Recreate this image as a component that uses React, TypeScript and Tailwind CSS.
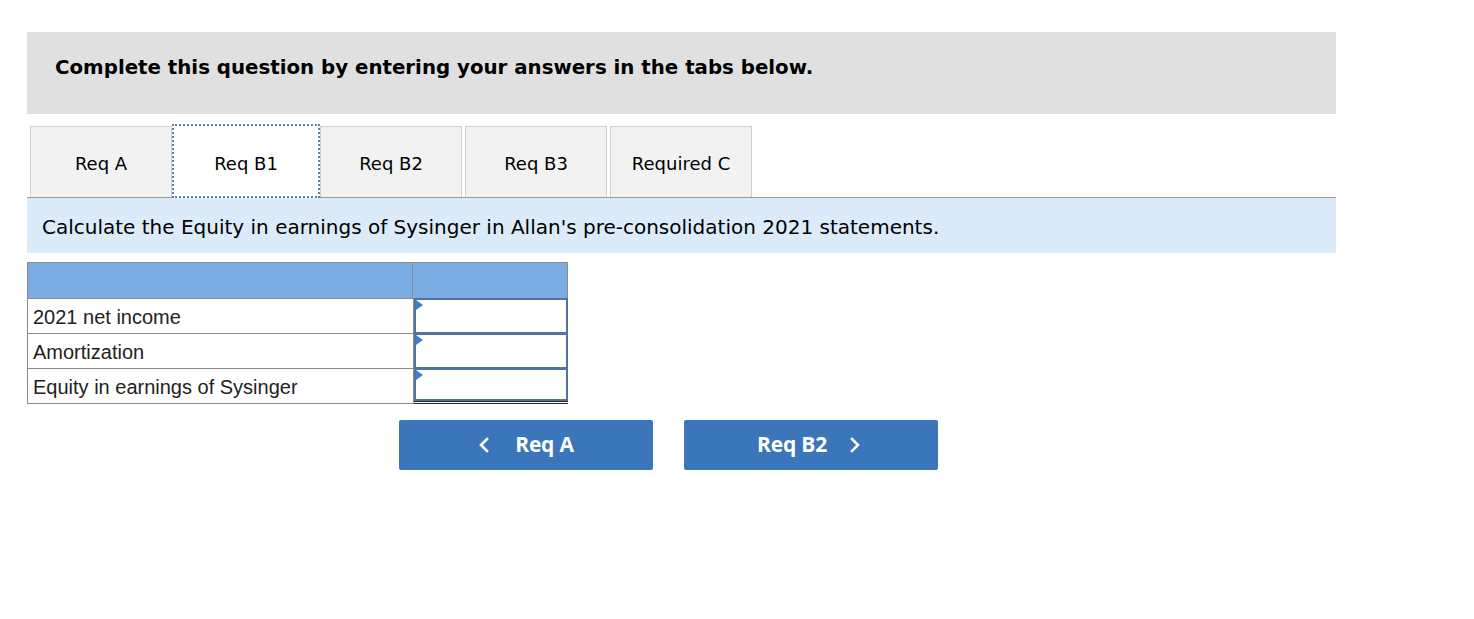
import React from 'react';

const tabs = ['Req A', 'Req B1', 'Req B2', 'Req B3', 'Required C'];

const rows = ['2021 net income', 'Amortization', 'Equity in earnings of Sysinger'];

function Arrow() {
  return (
    <span className="absolute left-0 top-0 w-0 h-0 border-y-[5px] border-y-transparent border-l-[7px] border-l-[#3d7fc9]" />
  );
}

function Chevron({ left }: { left?: boolean }) {
  return (
    <svg width="12" height="16" viewBox="0 0 12 16" fill="none" stroke="white" strokeWidth="2.6" strokeLinecap="square">
      {left ? <path d="M9 2 L3 8 L9 14" /> : <path d="M3 2 L9 8 L3 14" />}
    </svg>
  );
}

export default function App() {
  return (
    <div className="bg-white min-h-screen pt-8 pl-[27px] w-[1474px]" style={{ fontFamily: '"DejaVu Sans", Verdana, sans-serif' }}>
      <div className="w-[1309px]">
        {/* Header */}
        <div className="h-[82px] bg-[#e0e0e0] pl-7 pt-[21px]">
          <h1 className="text-[19.8px] font-bold text-black">
            Complete this question by entering your answers in the tabs below.
          </h1>
        </div>

        {/* Tabs */}
        <div className="mt-3 flex pl-[3px] border-b border-[#9a9a9a]">
          {tabs.map((t, i) =>
            i === 1 ? (
              <div key={t} className="w-[148px] h-[74px] -mt-[2px] -mb-px bg-white border-2 border-dotted border-[#5b7fb0] flex items-center justify-center text-[18px] text-black pt-[4px]">
                {t}
              </div>
            ) : (
              <div key={t} className={`w-[142px] h-[71px] bg-[#f2f2f2] border border-[#cfcfcf] border-b-0 flex items-center justify-center text-[18px] text-black pt-[3px] ${i > 2 ? 'ml-[3px]' : ''}`}>
                {t}
              </div>
            )
          )}
        </div>

        {/* Instruction */}
        <div className="h-[55px] bg-[#dbebf9] pl-[15px] flex items-center text-[20px] text-black pt-[2px]">
          Calculate the Equity in earnings of Sysinger in Allan's pre-consolidation 2021 statements.
        </div>

        {/* Table */}
        <div className="mt-[9px] w-[541px]" style={{ fontFamily: '"Liberation Sans", Arial, sans-serif' }}>
          <div className="flex h-[37px] bg-[#7aace3] border border-[#8a8a8a]">
            <div className="w-[385px] border-r border-[#8a8a8a]" />
            <div className="flex-1" />
          </div>
          {rows.map((r, i) => (
            <div key={r} className="flex h-[36px] -mt-px">
              <div className="w-[387px] border border-[#8a8a8a] flex items-center pl-[5px] pt-[2px] text-[20px] text-[#222]">
                {r}
              </div>
              <div className={`flex-1 ${i === 2 ? 'border-b-[3px] border-double border-[#222]' : ''}`}>
                <div className="relative h-full border-2 border-[#4f74a3] bg-white">
                  <Arrow />
                </div>
              </div>
            </div>
          ))}
        </div>

        {/* Buttons */}
        <div className="mt-4 ml-[372px] flex gap-[31px]" style={{ fontFamily: '"Open Sans", sans-serif' }}>
          <button className="w-[254px] h-[50px] bg-[#3a76b9] rounded-[2px] text-white font-bold text-[21px] flex items-center justify-center gap-[25px]">
            <Chevron left />
            <span className="tracking-[-0.2px]">Req A</span>
          </button>
          <button className="w-[254px] h-[50px] bg-[#3a76b9] rounded-[2px] text-white font-bold text-[21px] flex items-center justify-center gap-[22px] pr-[4px]">
            <span className="tracking-[-0.2px]">Req B2</span>
            <Chevron />
          </button>
        </div>
      </div>
    </div>
  );
}
